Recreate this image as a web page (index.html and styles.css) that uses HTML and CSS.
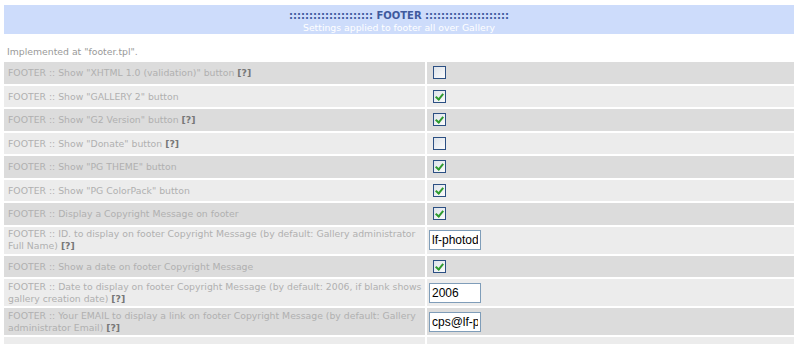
FILE: index.html
```html
<!DOCTYPE html>
<html lang="en">
<head>
  <meta charset="UTF-8" />
  <title>Footer settings</title>
  <link rel="stylesheet" href="styles.css">
</head>
<body>

<div class="panel">
  <div class="panel-head">
    <div class="title">::::::::::::::::::::: FOOTER :::::::::::::::::::::</div>
    <div class="subtitle">Settings applied to footer all over Gallery</div>
  </div>

  <p class="note">Implemented at "footer.tpl".</p>

  <table class="settings">
    <tr class="dark">
      <td class="label">FOOTER :: Show "XHTML 1.0 (validation)" button <b>[?]</b></td>
      <td class="value"><span class="check"></span></td>
    </tr>
    <tr class="light">
      <td class="label">FOOTER :: Show "GALLERY 2" button</td>
      <td class="value"><span class="check on"></span></td>
    </tr>
    <tr class="dark">
      <td class="label">FOOTER :: Show "G2 Version" button <b>[?]</b></td>
      <td class="value"><span class="check on"></span></td>
    </tr>
    <tr class="light">
      <td class="label">FOOTER :: Show "Donate" button <b>[?]</b></td>
      <td class="value"><span class="check"></span></td>
    </tr>
    <tr class="dark">
      <td class="label">FOOTER :: Show "PG THEME" button</td>
      <td class="value"><span class="check on"></span></td>
    </tr>
    <tr class="light">
      <td class="label">FOOTER :: Show "PG ColorPack" button</td>
      <td class="value"><span class="check on"></span></td>
    </tr>
    <tr class="dark">
      <td class="label">FOOTER :: Display a Copyright Message on footer</td>
      <td class="value"><span class="check on"></span></td>
    </tr>
    <tr class="light two">
      <td class="label">FOOTER :: ID. to display on footer Copyright Message (by default: Gallery administrator Full Name) <b>[?]</b></td>
      <td class="value"><input type="text" value="lf-photodesign"></td>
    </tr>
    <tr class="dark">
      <td class="label">FOOTER :: Show a date on footer Copyright Message</td>
      <td class="value"><span class="check on"></span></td>
    </tr>
    <tr class="light two">
      <td class="label">FOOTER :: Date to display on footer Copyright Message (by default: 2006, if blank shows gallery creation date) <b>[?]</b></td>
      <td class="value"><input type="text" value="2006"></td>
    </tr>
    <tr class="dark two">
      <td class="label">FOOTER :: Your EMAIL to display a link on footer Copyright Message (by default: Gallery administrator Email) <b>[?]</b></td>
      <td class="value"><input type="text" value="cps@lf-photodesign.com"></td>
    </tr>
    <tr class="light">
      <td class="label">&nbsp;</td>
      <td class="value">&nbsp;</td>
    </tr>
  </table>
</div>

</body>
</html>
```

FILE: styles.css
```css
body {
  margin: 0;
  padding: 5px 4px;
  background-color: #fff;
  font-family: "DejaVu Sans", Verdana, sans-serif;
  font-size: 9.3px;
  color: #b0b0b0;
}
.panel {
  width: 790px;
}
.panel-head {
  background-color: #cddcfb;
  text-align: center;
  padding: 4px 0 2px;
  height: 23px;
}
.title {
  font-weight: bold;
  font-size: 10px;
  color: #3f5a9e;
  line-height: 13px;
}
.subtitle {
  color: #fff;
  line-height: 11px;
}
.note {
  margin: 0;
  padding: 12px 3px 0;
  height: 14px;
  color: #999;
}
.settings {
  width: 790px;
  border-collapse: separate;
  border-spacing: 0 2px;
}
.settings td {
  padding: 0 4px;
  line-height: 11px;
  height: 21.5px;
  vertical-align: middle;
}
.settings tr.two td {
  height: 27px;
  line-height: 12px;
}
.settings tr.dark td {
  background-color: #dcdcdc;
}
.settings tr.light td {
  background-color: #ececec;
}
.settings td.label {
  width: 417px;
  padding-right: 0;
  border-right: 2px solid #fff;
}
.settings td.value {
  padding-left: 2px;
}
.label b {
  color: #777;
}
.check {
  display: inline-block;
  width: 11px;
  height: 11px;
  margin-left: 4px;
  border: 1px solid #2b4f83;
  background: linear-gradient(135deg, #dde3ea, #fbfbfb);
  vertical-align: middle;
  position: relative;
}
.check.on::after {
  content: "";
  position: absolute;
  left: 3px;
  top: 1px;
  width: 3px;
  height: 6px;
  border: solid #2e9a2e;
  border-width: 0 2px 2px 0;
  transform: rotate(40deg);
}
input[type="text"] {
  width: 46px;
  height: 16px;
  padding: 1px 2px;
  border: 1px solid #7f9db9;
  font-family: "Liberation Sans", Arial, sans-serif;
  font-size: 12px;
  color: #000;
  vertical-align: middle;
}
```
